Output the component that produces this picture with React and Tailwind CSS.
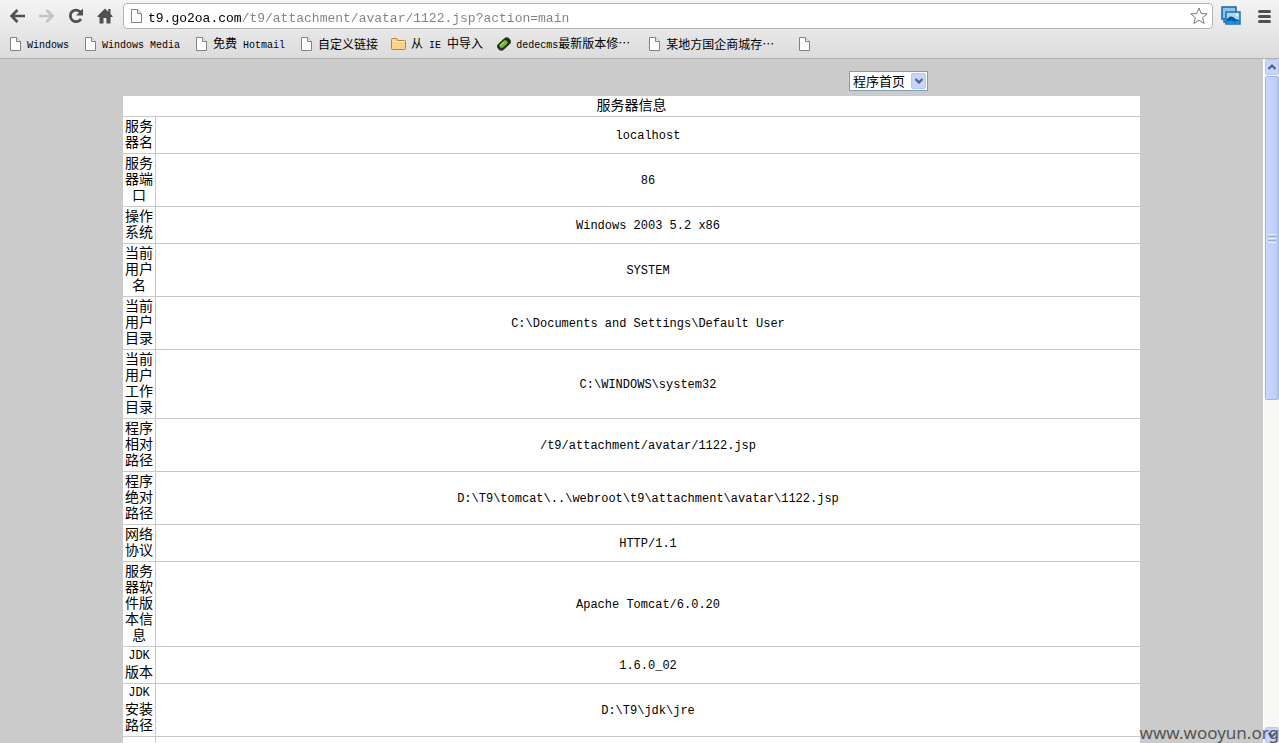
import React, { useState } from 'react';

const rows = [
  { label: '服务器名', value: 'localhost' },
  { label: '服务器端口', value: '86' },
  { label: '操作系统', value: 'Windows 2003 5.2 x86' },
  { label: '当前用户名', value: 'SYSTEM' },
  { label: '当前用户目录', value: 'C:\\Documents and Settings\\Default User' },
  { label: '当前用户工作目录', value: 'C:\\WINDOWS\\system32' },
  { label: '程序相对路径', value: '/t9/attachment/avatar/1122.jsp' },
  { label: '程序绝对路径', value: 'D:\\T9\\tomcat\\..\\webroot\\t9\\attachment\\avatar\\1122.jsp' },
  { label: '网络协议', value: 'HTTP/1.1' },
  { label: '服务器软件版本信息', value: 'Apache Tomcat/6.0.20' },
  { prefix: 'JDK', label: '版本', value: '1.6.0_02' },
  { prefix: 'JDK', label: '安装路径', value: 'D:\\T9\\jdk\\jre' },
  { label: '', value: '' },
];

const PageIcon = () => (
  <svg width="16" height="16" viewBox="0 0 16 16" className="shrink-0" aria-hidden="true">
    <path d="M3.5 1.5h6l4 4v9h-10z" fill="#fff" stroke="#828282" />
    <path d="M9.5 1.5v4h4" fill="#eee" stroke="#828282" />
  </svg>
);

const FolderIcon = () => (
  <svg width="16" height="16" viewBox="0 0 16 16" className="shrink-0" aria-hidden="true">
    <path d="M.5 12.5v-9q0-1 1-1h4q1 0 1 1v1h7q1 0 1 1v7q0 1-1 1h-12q-1 0-1-1z" fill="#fbd28a" stroke="#b98534" />
    <path d="M1.5 6q0-.5.5-.5h11q.5 0 .5.5" fill="none" stroke="#fff0c8" />
  </svg>
);

const DedeIcon = () => (
  <svg width="16" height="16" viewBox="0 0 16 16" className="shrink-0" aria-hidden="true">
    <g transform="rotate(-42 8 8)">
      <rect x="0.5" y="4" width="15" height="8" rx="3.5" fill="#20301a" />
      <rect x="3" y="5.5" width="9" height="4.5" rx="1.5" fill="#6fb52c" />
      <path d="M4 6.5h6" stroke="#b6e26a" />
    </g>
  </svg>
);

const Latin = ({ children }) => (
  <span className="font-['Liberation_Mono',monospace] text-[10px]">{children}</span>
);

const Bookmark = ({ icon, className = '', children }) => (
  <a href="#" className="flex items-center gap-1 whitespace-pre text-black">
    {icon || <PageIcon />}
    <span className={className}>{children}</span>
  </a>
);

const Toolbar = () => {
  const [url, setUrl] = useState('t9.go2oa.com/t9/attachment/avatar/1122.jsp?action=main');

  return (
    <div className="flex h-8 items-center pr-1 pl-2">
      <div className="flex items-center gap-[9px]">
        <button type="button" aria-label="Back" className="h-5 w-5">
          <svg width="20" height="20" viewBox="0 0 20 20">
            <path d="M17 10H4M9.5 4 3.5 10l6 6" fill="none" stroke="#505050" strokeWidth="2.6" />
          </svg>
        </button>
        <button type="button" aria-label="Forward" className="h-5 w-5">
          <svg width="20" height="20" viewBox="0 0 20 20">
            <path d="M2 10h13M9.5 4l6 6-6 6" fill="none" stroke="#c4c4c4" strokeWidth="2.6" />
          </svg>
        </button>
        <button type="button" aria-label="Reload" className="h-5 w-5">
          <svg width="20" height="20" viewBox="0 0 20 20">
            <path d="M14.5 6A5.8 5.8 0 1 0 15 13" fill="none" stroke="#505050" strokeWidth="2.8" />
            <path d="M17 2.5V9.5H10z" fill="#505050" />
          </svg>
        </button>
        <button type="button" aria-label="Home" className="h-5 w-5">
          <svg width="20" height="20" viewBox="0 0 20 20">
            <path d="M10 2.5 2.5 10v1h2v6.500h4V12h3v5.500h4V11h2v-1L15.500 8V3h-2.300v2.700z" fill="#505050" />
          </svg>
        </button>
      </div>
      <div className="ml-2 flex h-[26px] flex-1 items-center rounded-sm border border-[#b2b2b2] bg-white pr-1 pl-1">
        <PageIcon />
        <input
          type="text"
          aria-label="Address"
          value={url}
          onChange={(e) => setUrl(e.target.value)}
          className="ml-1 h-6 min-w-0 flex-1 bg-[linear-gradient(90deg,#000_94px,#808080_94px)] bg-clip-text pt-1 font-['Liberation_Mono',monospace] text-[13px] leading-5 text-transparent outline-none"
        />
        <button type="button" aria-label="Bookmark this page" className="h-[18px] w-[18px]">
          <svg width="18" height="18" viewBox="0 0 18 18">
            <path d="M9 1l2.200 5.500 6 .4-4.600 3.800 1.500 5.800L9 13.300l-5.100 3.200 1.500-5.800L.8 6.900l6-.4z" fill="#fff" stroke="#7a7a7a" strokeLinejoin="round" />
          </svg>
        </button>
      </div>
      <button type="button" aria-label="Screenshot extension" className="ml-2 h-5 w-5">
        <svg width="20" height="20" viewBox="0 0 20 20">
          <rect x="1" y="1" width="14" height="12" fill="#8fc4e4" stroke="#1763a6" strokeWidth="1.500" />
          <path d="M3 14v2h4" fill="none" stroke="#1763a6" strokeWidth="1.500" />
          <rect x="5" y="6" width="14" height="12" fill="#a9daf3" stroke="#1673bb" strokeWidth="1.500" />
          <path d="M5.500 14q2-4 5-3.500t4 2.500l4 1v4h-13z" fill="#075a9c" />
          <path d="M5.500 15.500l4-1 4 1 5-1v3.500h-13z" fill="#1592dc" />
          <circle cx="16" cy="9" r="1.200" fill="#fff" />
        </svg>
      </button>
      <button type="button" aria-label="Menu" className="ml-[14px] h-5 w-5">
        <svg width="20" height="20" viewBox="0 0 20 20">
          <path d="M4.500 5.500h10M4.500 10.500h10M4.500 15.500h10" stroke="#505050" strokeWidth="3" strokeLinecap="round" />
        </svg>
      </button>
    </div>
  );
};

const BookmarksBar = () => (
  <nav className="flex h-[26px] items-center gap-[13px] overflow-hidden pb-0.5 pl-[7px] font-['Noto_Sans_CJK_SC',sans-serif] text-xs">
    <Bookmark><Latin>Windows</Latin></Bookmark>
    <Bookmark><Latin>Windows Media</Latin></Bookmark>
    <Bookmark>免费<Latin> Hotmail</Latin></Bookmark>
    <Bookmark>自定义链接</Bookmark>
    <Bookmark icon={<FolderIcon />}>从<Latin> IE </Latin>中导入</Bookmark>
    <Bookmark icon={<DedeIcon />} className="w-[117px]"><Latin>dedecms</Latin>最新版本修⋯</Bookmark>
    <Bookmark className="w-[117px]">某地方国企商城存⋯</Bookmark>
    <Bookmark />
  </nav>
);

const ScrollButton = ({ label, d }) => (
  <button
    type="button"
    aria-label={label}
    className="flex h-4 w-[14px] shrink-0 items-center justify-center rounded-xs border border-[#b4c8f6] bg-[#c6d5fd]"
  >
    <svg width="10" height="10" viewBox="0 0 10 10">
      <path d={d} fill="none" stroke="#4d6185" strokeWidth="2.200" />
    </svg>
  </button>
);

const Scrollbar = () => (
  <div className="flex w-4 shrink-0 flex-col items-center border-l border-white bg-[#f8f8f4]">
    <ScrollButton label="Scroll up" d="M1.500 7 5 3.500 8.500 7" />
    <div className="mt-px flex h-[324px] w-[14px] flex-col items-center justify-center gap-px rounded-xs border border-[#9db7ee] bg-[linear-gradient(90deg,#c9d8fe,#bfcffc_70%,#b3c8f6)]">
      <span className="h-px w-2 bg-[#eef4fe]" />
      <span className="h-px w-2 bg-[#8cb0f8]" />
      <span className="h-px w-2 bg-[#eef4fe]" />
      <span className="h-px w-2 bg-[#8cb0f8]" />
      <span className="h-px w-2 bg-[#eef4fe]" />
    </div>
    <div className="flex-1" />
    <ScrollButton label="Scroll down" d="M1.500 3 5 6.500 8.500 3" />
  </div>
);

const ServerInfo = () => (
  <table className="w-full table-fixed border-separate border-spacing-0 bg-white text-center text-sm leading-4 text-black">
    <colgroup>
      <col className="w-[33px]" />
      <col />
    </colgroup>
    <thead>
      <tr>
        <th colSpan={2} className="border-b border-[#c8c8c8] px-0.5 pb-1 font-normal">服务器信息</th>
      </tr>
    </thead>
    <tbody>
      {rows.map((row) => (
        <tr key={row.value} className="h-[37px]">
          <th scope="row" className="border-r border-b border-[#c8c8c8] px-0.5 pb-1 font-normal">
            {row.prefix && (
              <span className="block pt-0.5 font-['Liberation_Mono',monospace] text-xs leading-[14px]">{row.prefix}</span>
            )}
            {row.label}
          </th>
          <td className="border-b border-[#c8c8c8] px-0.5 pt-1 pb-0.5 font-['Liberation_Mono',monospace] text-xs leading-4">
            {row.value}
          </td>
        </tr>
      ))}
    </tbody>
  </table>
);

const App = () => {
  const [page, setPage] = useState('main');

  return (
    <div lang="zh-CN" className="relative flex h-screen flex-col overflow-hidden bg-[#cbcbcb] font-['Noto_Sans_CJK_SC',sans-serif]">
      <header className="shrink-0 border-b border-[#b0b0b0] bg-linear-to-b from-[#f4f4f4] to-[#dcdcdc]">
        <Toolbar />
        <BookmarksBar />
      </header>
      <div className="flex min-h-0 flex-1">
        <main className="min-w-0 flex-1 overflow-hidden px-[123px] pt-3">
          <div className="mb-[5px] flex justify-end pr-[212px]">
            <div className="relative h-5 w-[79px]">
              <select
                aria-label="程序菜单"
                value={page}
                onChange={(e) => setPage(e.target.value)}
                className="block h-5 w-full appearance-none border border-[#7f9db9] bg-white pl-[3px] text-[13px] leading-4 text-black"
              >
                <option value="main">程序首页</option>
              </select>
              <span className="pointer-events-none absolute top-0.5 right-0.5 flex h-4 w-[15px] items-center justify-center rounded-xs border border-[#b4c8f6] bg-[#c6d5fd]">
                <svg width="10" height="10" viewBox="0 0 10 10">
                  <path d="M1.500 3 5 6.500 8.500 3" fill="none" stroke="#4d6185" strokeWidth="2.200" />
                </svg>
              </span>
            </div>
          </div>
          <ServerInfo />
        </main>
        <Scrollbar />
      </div>
      <p className="pointer-events-none absolute right-0 bottom-0 font-['Noto_Sans',sans-serif] text-[17px] leading-5 text-[#555]">
        www.wooyun.org
      </p>
    </div>
  );
};

export default App;
